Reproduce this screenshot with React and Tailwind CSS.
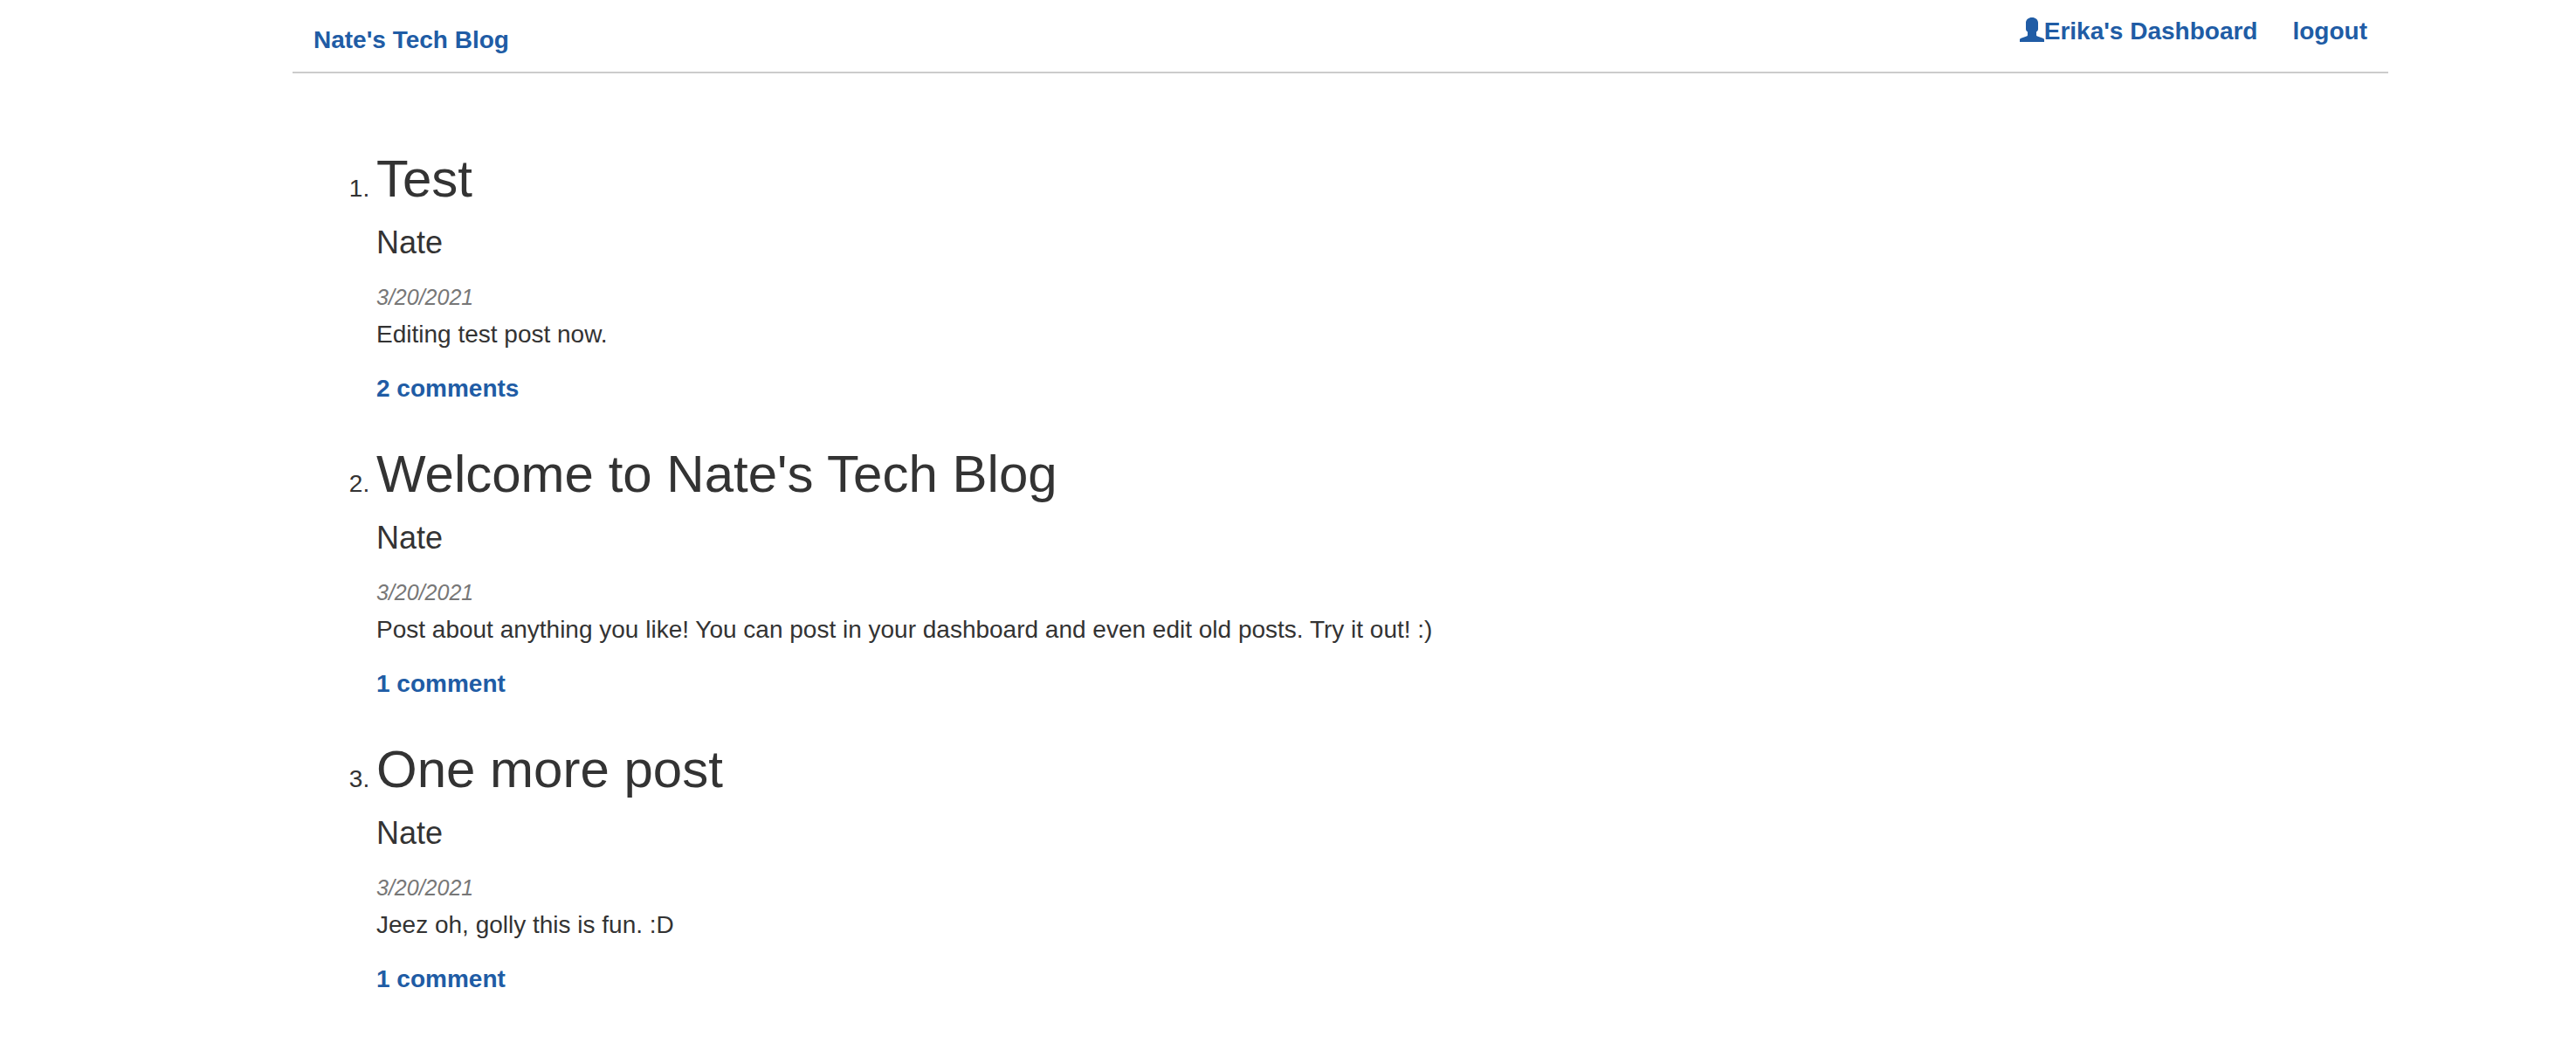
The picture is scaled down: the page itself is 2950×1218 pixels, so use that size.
const posts = [
  { title: "Test", author: "Nate", date: "3/20/2021", body: "Editing test post now.", comments: "2 comments" },
  {
    title: "Welcome to Nate's Tech Blog",
    author: "Nate",
    date: "3/20/2021",
    body: "Post about anything you like! You can post in your dashboard and even edit old posts. Try it out! :)",
    comments: "1 comment",
  },
  { title: "One more post", author: "Nate", date: "3/20/2021", body: "Jeez oh, golly this is fun. :D", comments: "1 comment" },
];

function UserIcon() {
  return (
    <svg className="mb-1 size-7" viewBox="0 0 28 28" fill="currentColor" aria-hidden="true">
      <path d="M14 0C10 0 7 2.600 7 6v7c0 1.500.5 2.600 2 3.400V20c0 .8-.4 1.200-1.200 1.500L1.500 23.800C.5 24.200 0 24.700 0 25.600V28h28v-2.400c0-.9-.5-1.400-1.500-1.800l-6.300-2.300c-.8-.3-1.200-.7-1.200-1.500v-3.600c1.500-.8 2-1.900 2-3.400V6c0-3.400-3-6-7-6z" />
    </svg>
  );
}

export default function App() {
  return (
    <div className="mr-[215px] ml-[335px] pb-16 font-['Liberation_Sans',Arial,sans-serif] text-[28px] leading-10 text-[#333333]">
      <header className="flex items-start justify-between border-b-2 border-[#cccccc] px-6 pb-4 font-bold text-[#205ca5]">
        <a href="#home" className="mt-[26px]">Nate's Tech Blog</a>
        <nav className="mt-4 flex gap-10">
          <a href="#dashboard" className="flex items-center">
            <UserIcon />
            Erika's Dashboard
          </a>
          <a href="#logout">logout</a>
        </nav>
      </header>
      <main className="pt-22">
        <ol className="flex list-decimal flex-col gap-[45px] pl-24">
          {posts.map((post) => (
            <li key={post.title}>
              <h1 className="text-[60px] leading-[66px]">{post.title}</h1>
              <h2 className="mt-5 text-[36px] leading-10">{post.author}</h2>
              <p className="mt-6 text-[25px] leading-9 text-[#777777] italic">{post.date}</p>
              <p className="mt-[5px]">{post.body}</p>
              <a href="#comments" className="mt-[22px] block w-fit font-bold text-[#205ca5]">{post.comments}</a>
            </li>
          ))}
        </ol>
      </main>
    </div>
  );
}
